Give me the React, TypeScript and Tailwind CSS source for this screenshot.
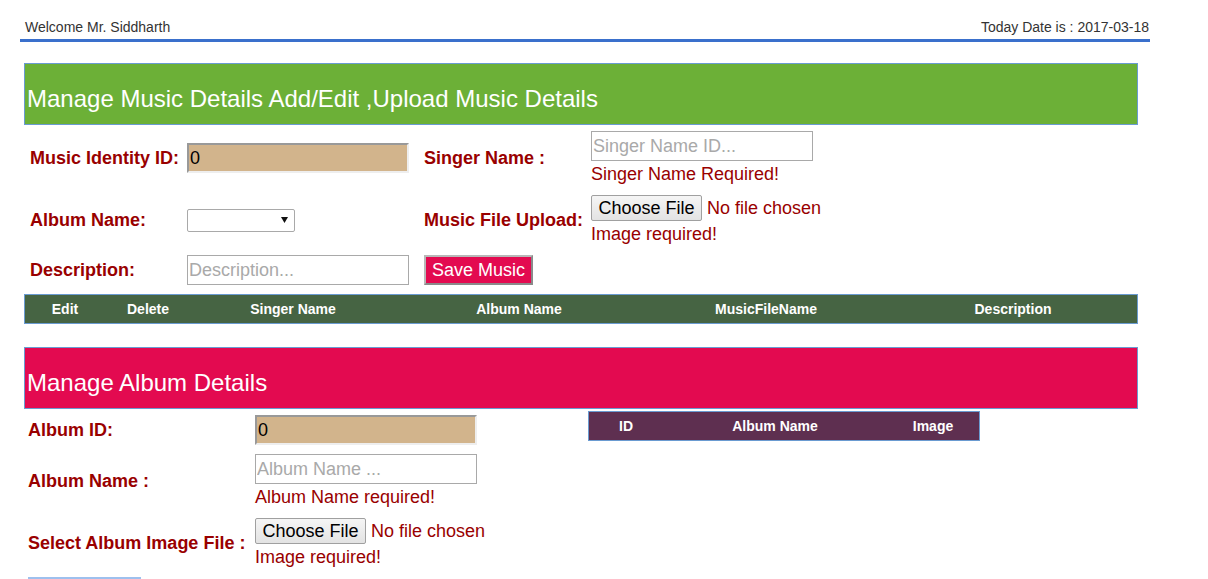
const FONT = "font-['Liberation_Sans',Arial,sans-serif]";

const Label = ({ children }: { children: React.ReactNode }) => (
  <div className="text-[18px] leading-[21px] font-bold text-[#990000]">{children}</div>
);

const ErrorText = ({ children }: { children: React.ReactNode }) => (
  <div className="mt-[3px] text-[18px] leading-[21px] text-[#990000]">{children}</div>
);

const IdInput = () => (
  <input
    readOnly
    value="0"
    className="w-[222px] h-[30px] bg-[#d2b48c] border-2 border-t-[#999] border-l-[#999] border-b-[#eee] border-r-[#eee] px-[1px] text-[18px] text-black outline-none"
  />
);

const TextInput = ({ placeholder }: { placeholder: string }) => (
  <input
    placeholder={placeholder}
    className="w-[222px] h-[30px] bg-white border border-[#a9a9a9] px-[1px] text-[18px] text-black placeholder:text-[#a9a9a9] outline-none"
  />
);

const FileChooser = () => (
  <div className="flex items-center">
    <button className="w-[111px] h-[26px] rounded-[2px] border border-[#a0a0a0] bg-gradient-to-b from-[#f5f5f5] to-[#e3e3e3] text-[18px] leading-[20px] text-black">
      Choose File
    </button>
    <span className="ml-[5px] text-[18px] leading-[21px] text-[#990000]">No file chosen</span>
  </div>
);

const TableHead = ({ cols, widths, bg }: { cols: string[]; widths: string; bg: string }) => (
  <div className={`h-[30px] border border-[#6a9bd1] ${bg} grid ${widths} items-center text-center text-white font-bold text-[14px]`}>
    {cols.map((c) => (
      <div key={c}>{c}</div>
    ))}
  </div>
);

export default function App() {
  return (
    <div className={`min-h-screen bg-white ${FONT}`}>
      {/* top bar */}
      <div className="ml-[20px] w-[1130px] flex justify-between pt-[18px] pb-[3px] pl-[5px] pr-[1px] border-b-[3px] border-[#3a70cc] text-[14px] leading-[18px] text-[#333]">
        <span>Welcome Mr. Siddharth</span>
        <span>Today Date is : 2017-03-18</span>
      </div>

      <div className="ml-[24px] w-[1114px] mt-[21px]">
        {/* music section */}
        <div className="h-[62px] bg-[#6cb037] border border-[#6a9bd1] pt-[21px] pl-[2px] text-[24px] leading-[28px] text-white">
          Manage Music Details Add/Edit ,Upload Music Details
        </div>

        <div className="mt-[6px] pl-[6px] grid grid-cols-[157px_237px_167px_1fr] gap-y-[10px] items-center">
          <Label>Music Identity ID:</Label>
          <div>
            <IdInput />
          </div>
          <Label>Singer Name :</Label>
          <div className="flex flex-col">
            <TextInput placeholder="Singer Name ID..." />
            <ErrorText>Singer Name Required!</ErrorText>
          </div>

          <Label>Album Name:</Label>
          <div>
            <div className="w-[108px] h-[23px] bg-white border border-[#a9a9a9] rounded-[2px] flex items-center justify-end pr-[6px]">
              <svg width="7" height="6" viewBox="0 0 7 6">
                <path d="M0 0 L7 0 L3.5 6 Z" fill="#111" />
              </svg>
            </div>
          </div>
          <Label>Music File Upload:</Label>
          <div className="flex flex-col">
            <FileChooser />
            <ErrorText>Image required!</ErrorText>
          </div>

          <Label>Description:</Label>
          <div>
            <TextInput placeholder="Description..." />
          </div>
          <div>
            <button className="w-[109px] h-[30px] bg-[#e30a50] border-2 border-[#b8b8b8] border-r-[#8a8a8a] border-b-[#8a8a8a] text-[18px] leading-[21px] text-white">
              Save Music
            </button>
          </div>
          <div />
        </div>

        <div className="mt-[9px]">
          <TableHead
            cols={["Edit", "Delete", "Singer Name", "Album Name", "MusicFileName", "Description"]}
            widths="grid-cols-[80px_86px_204px_248px_246px_248px]"
            bg="bg-[#466443]"
          />
        </div>

        {/* album section */}
        <div className="mt-[23px] h-[62px] bg-[#e30a50] border border-[#6a9bd1] pt-[21px] pl-[2px] text-[24px] leading-[28px] text-white">
          Manage Album Details
        </div>

        <div className="flex items-start">
          <div className="w-[564px] pt-[6px] pl-[4px] flex flex-col">
            <div className="flex items-center">
              <div className="w-[227px]">
                <Label>Album ID:</Label>
              </div>
              <IdInput />
            </div>
            <div className="mt-[9px] flex items-center">
              <div className="w-[227px]">
                <Label>Album Name :</Label>
              </div>
              <div className="flex flex-col">
                <TextInput placeholder="Album Name ..." />
                <ErrorText>Album Name required!</ErrorText>
              </div>
            </div>
            <div className="mt-[10px] flex items-center">
              <div className="w-[227px]">
                <Label>Select Album Image File :</Label>
              </div>
              <div className="flex flex-col">
                <FileChooser />
                <ErrorText>Image required!</ErrorText>
              </div>
            </div>
            <div className="mt-[9px]">
              <button className="w-[113px] h-[30px] bg-[#c9dcf7] border-2 border-[#9ec0ee]" />
            </div>
          </div>

          <div className="mt-[2px] w-[392px]">
            <TableHead
              cols={["ID", "Album Name", "Image"]}
              widths="grid-cols-[74px_224px_92px]"
              bg="bg-[#5e2f50]"
            />
          </div>
        </div>
      </div>
    </div>
  );
}
